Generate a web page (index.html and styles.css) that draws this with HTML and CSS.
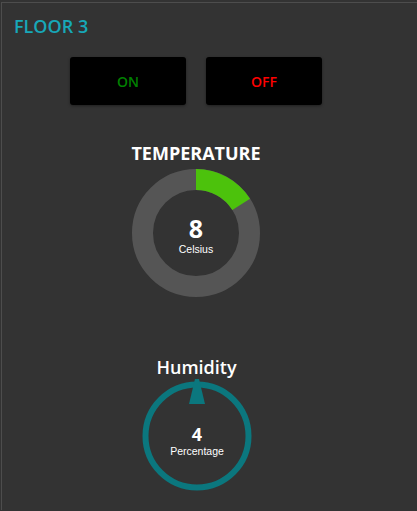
FILE: index.html
```html
<!DOCTYPE html>
<html>
<head>
<meta charset="utf-8">
<link rel="stylesheet" href="styles.css">
</head>
<body>
<div class="panel">
  <div class="column">
    <h1 class="title">FLOOR 3</h1>
    <div class="buttons">
      <button class="btn btn-on">ON</button>
      <button class="btn btn-off">OFF</button>
    </div>
    <div class="gauge gauge-temp">
      <h2 class="gauge-title">TEMPERATURE</h2>
      <svg class="donut" width="128" height="128" viewBox="0 0 128 128">
        <circle cx="64" cy="64" r="53.5" fill="none" stroke="#555555" stroke-width="21"/>
        <path d="M64 10.5 A53.5 53.5 0 0 1 109.17 35.33" fill="none" stroke="#4cc20c" stroke-width="21"/>
        <text class="val-big" x="64" y="69" text-anchor="middle">8</text>
        <text class="val-unit" x="64" y="83.5" text-anchor="middle">Celsius</text>
      </svg>
    </div>
    <div class="gauge gauge-hum">
      <h2 class="gauge-title gauge-title-hum">Humidity</h2>
      <svg class="dial" width="116" height="116" viewBox="0 0 116 116">
        <circle cx="58" cy="58" r="51.5" fill="none" stroke="#0b777e" stroke-width="6"/>
        <polygon points="56,1 60,1 66,26 50,26" fill="#0b777e"/>
        <text class="val-hum" x="58" y="63" text-anchor="middle">4</text>
        <text class="val-unit" x="58" y="77" text-anchor="middle">Percentage</text>
      </svg>
    </div>
  </div>
</div>
</body>
</html>
```
FILE: styles.css
```css
html, body {
  margin: 0;
  padding: 0;
  background: #333333;
  height: 100%;
}
body {
  font-family: "Open Sans", "Liberation Sans", sans-serif;
  color: #ffffff;
  overflow: hidden;
}
.panel {
  margin: 2px 0 0 1px;
  border-top: 1px solid #4d4d4d;
  border-left: 1px solid #4d4d4d;
  height: calc(100% - 3px);
  padding-top: 10px;
  box-sizing: border-box;
  overflow: hidden;
}
.column {
  width: 388px;
}
.title {
  margin: 0 0 0 12px;
  font-size: 18px;
  line-height: 26px;
  font-weight: 600;
  color: #17a8b8;
}
.buttons {
  display: flex;
  justify-content: center;
  gap: 20px;
  margin-top: 18px;
}
.btn {
  width: 116px;
  height: 48px;
  border: none;
  border-radius: 3px;
  background: #000000;
  box-shadow: 0 1px 3px rgba(0, 0, 0, 0.4);
  font-family: "Open Sans", "Liberation Sans", sans-serif;
  font-size: 14px;
  font-weight: 600;
  padding: 0;
}
.btn-on { color: #008000; }
.btn-off { color: #ff0000; }
.gauge {
  display: flex;
  flex-direction: column;
  align-items: center;
}
.gauge-temp { margin-top: 36px; }
.gauge-hum { margin-top: 58px; padding-left: 1px; }
.gauge-title {
  margin: 0 0 4px;
  font-size: 18px;
  line-height: 24px;
  font-weight: 700;
  color: #ffffff;
}
.gauge-title-hum {
  font-weight: 600;
  margin-bottom: -1px;
}
.donut, .dial { display: block; }
.val-big {
  font-family: "Open Sans", "Liberation Sans", sans-serif;
  font-size: 25px;
  font-weight: 700;
  fill: #ffffff;
}
.val-hum {
  font-family: "Open Sans", "Liberation Sans", sans-serif;
  font-size: 18px;
  font-weight: 700;
  fill: #ffffff;
}
.val-unit {
  font-family: "Liberation Sans", Arial, sans-serif;
  font-size: 10.5px;
  fill: #ffffff;
}
```
